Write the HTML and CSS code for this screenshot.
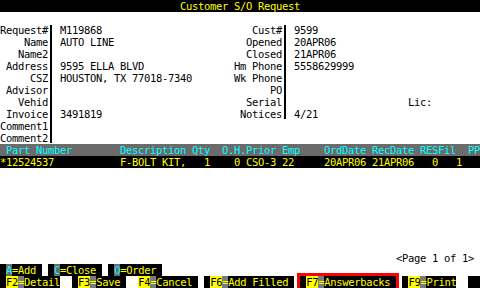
FILE: index.html
```html
<!DOCTYPE html>
<html lang="en">
<head>
    <meta charset="UTF-8">
    <title>Customer S/O Request</title>
    <link rel="stylesheet" href="styles.css">
</head>
<body>
<div class="screen">
    <div class="title">Customer S/O Request</div>

    <div class="form">
        <div class="block left">
            <div class="labels">
                <div>Request#</div>
                <div>Name</div>
                <div>Name2</div>
                <div>Address</div>
                <div>CSZ</div>
                <div>Advisor</div>
                <div>Vehid</div>
                <div>Invoice</div>
                <div>Comment1</div>
                <div>Comment2</div>
            </div>
            <div class="bar"></div>
            <div class="values">
                <div>M119868</div>
                <div>AUTO LINE</div>
                <div></div>
                <div>9595 ELLA BLVD</div>
                <div>HOUSTON, TX 77018-7340</div>
                <div></div>
                <div></div>
                <div>3491819</div>
                <div></div>
                <div></div>
            </div>
        </div>
        <div class="block right">
            <div class="labels">
                <div>Cust#</div>
                <div>Opened</div>
                <div>Closed</div>
                <div>Hm Phone</div>
                <div>Wk Phone</div>
                <div>PO</div>
                <div>Serial</div>
                <div>Notices</div>
            </div>
            <div class="bar"></div>
            <div class="values">
                <div>9599</div>
                <div>20APR06</div>
                <div>21APR06</div>
                <div>5558629999</div>
                <div></div>
                <div></div>
                <div><span class="lic">Lic:</span></div>
                <div>4/21</div>
            </div>
        </div>
    </div>

    <div class="list">
        <div class="head"> Part Number        Description Qty  O.H.Prior Emp    OrdDate RecDate RESFil  PP</div>
        <div class="line">*12524537           F-BOLT KIT,   1    0 CSO-3 22     20APR06 21APR06   0   1</div>
    </div>

    <div class="pager">&lt;Page 1 of 1&gt;</div>
    <div class="keys"><span class="seg"> <span class="hk">A</span>=Add </span> <span class="seg"> <span class="hk">C</span>=Close </span> <span class="seg"> <span class="hk">O</span>=Order </span></div>
    <div class="keys"><span class="seg"> <span class="fk">F2</span><span class="eq">=</span>Detail</span>  <span class="seg"> <span class="fk">F3</span><span class="eq">=</span>Save </span>  <span class="seg"><span class="fk">F4</span><span class="eq">=</span>Cancel </span> <span class="seg"> <span class="fk">F6</span><span class="eq">=</span>Add Filled </span> <span class="seg sel"> <span class="fk">F7</span><span class="eq">=</span>Answerbacks </span> <span class="seg"> <span class="fk">F9</span><span class="eq">=</span>Print</span>  <span class="seg">  </span></div>
</div>
</body>
</html>
```

FILE: styles.css
```css
body {
    margin: 0;
    background: #fff;
    overflow: hidden;
}
/* 80x24 terminal, every cell 6x12 px */
.screen {
    width: 480px;
    height: 288px;
    font-family: "DejaVu Sans Mono", monospace;
    font-size: 10.5px;
    line-height: 12px;
    letter-spacing: -0.3215px;
    color: #000;
    display: flex;
    flex-direction: column;
}
.title {
    height: 12px;
    background: #000;
    color: #ffff00;
    text-align: center;
}
.form {
    display: flex;
    align-items: flex-start;
    margin-top: 12px;
}
.block {
    display: flex;
}
.block.left {
    width: 234px;
}
.block.right {
    width: 246px;
}
.labels {
    width: 48px;
    text-align: right;
}
.labels div,
.values div {
    height: 12px;
    white-space: pre;
}
.bar {
    width: 0;
    border-left: 2px solid #000;
    margin: 1px 8px 1px 2px;
}
.values {
    flex: 1;
}
.lic {
    margin-left: 114px;
}
.list {
    flex: 1;
}
.head,
.line {
    height: 12px;
    white-space: pre;
}
.head {
    background: #6b6b6b;
    color: #00ffff;
}
.line {
    background: #000;
    color: #ffff00;
}
.pager {
    height: 12px;
    text-align: right;
    padding-right: 6px;
}
.keys {
    height: 12px;
    white-space: pre;
}
.seg {
    background: #000;
    color: #ffff00;
}
.hk {
    background: #6b6b6b;
    color: #00ffff;
}
.fk {
    background: #ffff00;
    color: #000;
}
.eq {
    background: #7a7a7a;
    color: #ffff00;
}
.seg.sel {
    outline: 3px solid #ff0000;
}
```
